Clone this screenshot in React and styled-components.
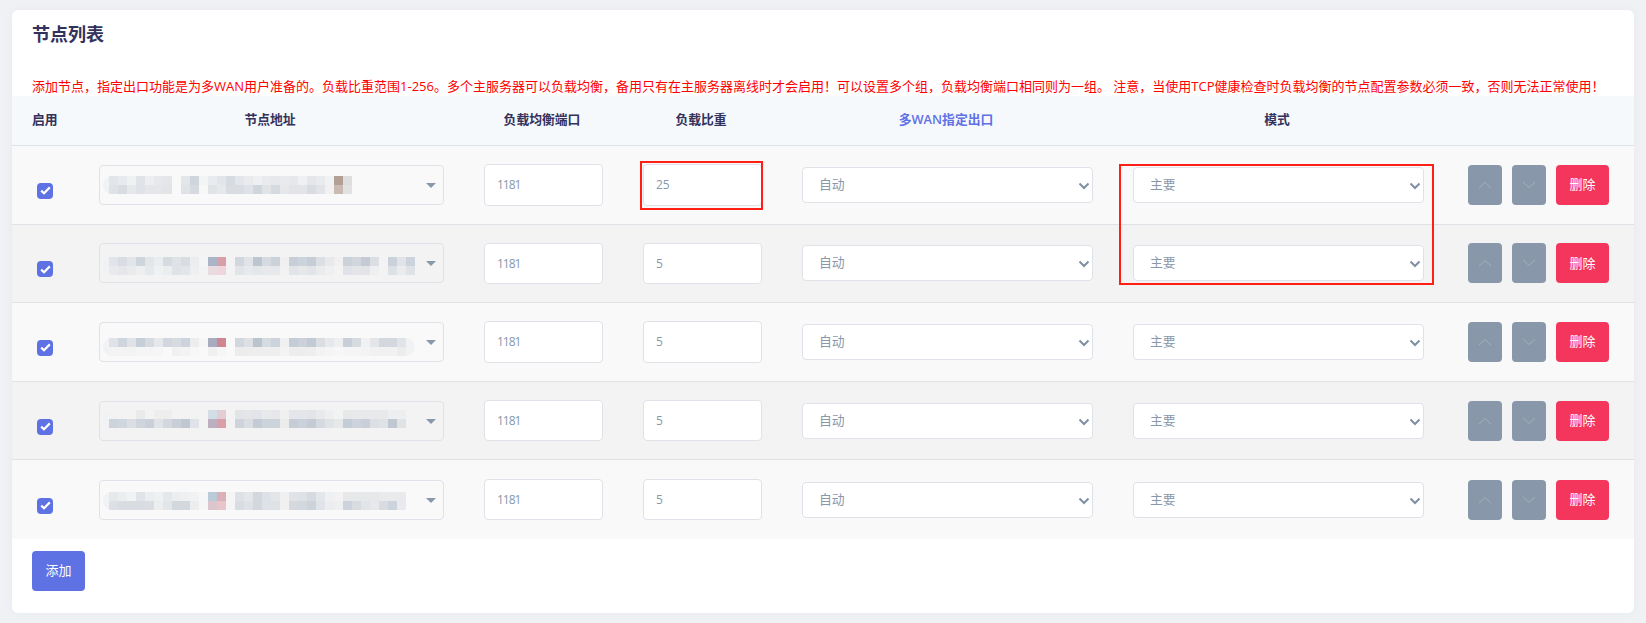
import React from 'react';
import styled, { createGlobalStyle } from 'styled-components';

const FONT = '"Open Sans", "Noto Sans CJK SC", sans-serif';
const COLUMNS = '67px 385px 159px 159px 331px 331px 190px';

const GlobalStyle = createGlobalStyle`
  html, body {
    margin: 0;
    background: #eff1f5;
    font-family: ${FONT};
  }
  * {
    box-sizing: border-box;
  }
`;

const Page = styled.div`
  padding: 10px 12px;
  height: 623px;
  overflow: hidden;
`;

const Card = styled.section`
  position: relative;
  background: #fff;
  border-radius: 6px;
  padding-top: 12px;
  padding-bottom: 22px;
  box-shadow: 0 0 8px rgba(136, 152, 170, 0.08);
  overflow: hidden;
`;

const Title = styled.h3`
  margin: 0;
  padding-left: 20px;
  font-size: 18px;
  line-height: 24px;
  font-weight: 600;
  color: #32325d;
`;

const Notice = styled.div`
  margin-top: 30px;
  padding-left: 20px;
  font-size: 13px;
  line-height: 20px;
  color: #ff0000;
  white-space: nowrap;
`;

const HeadRow = styled.div`
  display: grid;
  grid-template-columns: ${COLUMNS};
  align-items: center;
  height: 50px;
  padding-bottom: 5px;
  background: #f6f9fc;
  border-bottom: 1px solid #dfe2e6;
`;

const HeadCell = styled.div`
  padding: ${(p) => (p.$left ? '0 0 0 20px' : '0 23px 0 20px')};
  font-size: 12.8px;
  font-weight: 600;
  text-align: ${(p) => (p.$left ? 'left' : 'center')};
  color: ${(p) => (p.$accent ? '#5e72e4' : '#32325d')};
`;

const Row = styled.div`
  display: grid;
  grid-template-columns: ${COLUMNS};
  align-items: center;
  height: 78.6px;
  background: ${(p) => (p.$even ? '#f3f3f3' : '#f9f9f9')};
  border-bottom: ${(p) => (p.$last ? '0' : '1px solid #dfe2e6')};
`;

const Cell = styled.div`
  padding: 0 20px;
`;

const CheckCell = styled.div`
  padding: 12px 0 0 25px;
  display: flex;
`;

const CheckLabel = styled.label`
  display: flex;
  align-items: center;
  justify-content: center;
  width: 16px;
  height: 16px;
  border-radius: 4px;
  background: #5e72e4;

  input {
    display: none;
  }
`;

const AddressBox = styled.div`
  position: relative;
  height: 40px;
  border: 1px solid #dfe2e8;
  border-radius: 4px;
  display: flex;
  align-items: flex-start;
  padding-left: 3px;
`;

const Caret = styled.span`
  position: absolute;
  right: 7px;
  top: 17px;
  border-style: solid;
  border-width: 5px 5.5px 0;
  border-color: #8898aa transparent transparent;
`;

const MosaicSvg = styled.svg`
  display: block;
  margin-top: ${(p) => p.$top}px;
`;

const TextInput = styled.input`
  display: block;
  width: 100%;
  height: 41.5px;
  padding: 0 12px;
  border: 1px solid #dfe2e8;
  border-radius: 4px;
  background: #fff;
  font-family: ${FONT};
  font-size: 12px;
  letter-spacing: ${(p) => (p.$tight ? '-1px' : '0')};
  color: #8898aa;
  outline: none;
`;

const SelectWrap = styled.div`
  position: relative;
`;

const NativeSelect = styled.select`
  display: block;
  width: 100%;
  height: 36px;
  padding: 0 16px 2px;
  border: 1px solid #dfe2e8;
  border-radius: 4px;
  background: #fff;
  font-family: ${FONT};
  font-size: 12.8px;
  color: #8898aa;
  appearance: none;
  outline: none;
`;

const SelectIcon = styled.svg`
  position: absolute;
  right: 3px;
  top: 15px;
  pointer-events: none;
`;

const Actions = styled.div`
  display: flex;
  gap: 10px;
  padding-left: 24px;
`;

const MoveButton = styled.button`
  width: 34px;
  height: 40px;
  padding: 0;
  display: flex;
  align-items: center;
  justify-content: center;
  border: 0;
  border-radius: 4px;
  background: #8898aa;
`;

const DeleteButton = styled.button`
  width: 53px;
  height: 40px;
  padding: 0 0 2px;
  border: 0;
  border-radius: 4px;
  background: #f5365c;
  color: #fff;
  font-family: ${FONT};
  font-size: 13px;
`;

const AddButton = styled.button`
  display: block;
  width: 53px;
  height: 40px;
  margin: 12px 0 0 20px;
  padding: 0 0 3px;
  border: 0;
  border-radius: 4px;
  background: #5e72e4;
  color: #fff;
  font-family: ${FONT};
  font-size: 13px;
`;

const Annotation = styled.div`
  position: absolute;
  left: ${(p) => p.$x}px;
  top: ${(p) => p.$y}px;
  width: ${(p) => p.$w}px;
  height: ${(p) => p.$h}px;
  border: 2px solid #ff1f14;
  pointer-events: none;
`;

// two-digit tokens are greys, six-digit tokens are full colours
const MOSAICS = [
  {
    top: 10,
    blob: 249,
    rows: [
      'e2e5e9 e8eaed f0f1f3 e0e3e7 eceef0 e6e8eb e4e6ea f9 e3e6ea cfd5dd f3f4f5 e9ebee e2e5e9 d6dae1 e2e5e9 e9ebee eff0f2 e8eaed e6e8eb e8eaed e6e8eb eef0f1 e4e6e9 e8eaed f1f2f3 b3a094 de',
      'dfe2e6 d9dde2 e6e8eb dfe2e6 e4e6e9 e4e6e9 e2e4e8 f9 dfe2e6 d5d9e0 f7 e1e4e7 e6e8eb d9dde2 d9dde2 dfe2e6 d0d6de e1e4e7 d5d9e0 e6e8eb e2e4e8 e2e4e8 d9dde2 e2e4e8 f1 c9bbb2 e2',
    ],
  },
  {
    top: 13,
    blob: 100,
    rows: [
      'e1e4e8 d9dde3 e3e6e9 cfd5dc e3e6e9 eaedef d6dbe1 dfe2e7 d9dde3 ebedef f5 aab6c8 d69faa f3 d2d7de e0e3e8 bcc5d0 d6dbe1 ccd2da f0 c7ced8 cdd3dc c6cdd7 dce0e5 e7e9ec f0 ccd2da d2d7de c4cbd6 dbdfe4 f3 cbd1da e0e3e7 cdd3dc',
      'e8eaed e5e7ea e8eaec eeeff1 e6e9eb f0f1f3 ecedef dfe2e6 e3e5e9 eeeff1 f3 e9dbdf eed6da f3 e1e4e8 e7e9ec e4e7ea e6e8eb e6e8eb f1 e1e4e8 e5e7ea e1e4e8 e9ebed eef0f1 f3 dfe2e6 e3e5e9 e2e4e8 eeeff1 f3 dde0e5 e9ebed dfe2e6',
    ],
  },
  {
    top: 15,
    blob: 312,
    rows: [
      'dfe3e8 ced5dc dfe3e8 c6ced8 d6dbe1 e6e9ec d2d7df d6dbe1 cdd3dc ebedef f6 a9acbf ce8790 f9 d2d7de dde0e5 bac4cf d6dbe1 cdd3dc f0 c4ccd6 cbd1da c2cad5 dadee3 e6e8eb edeff1 c8cfd8 d6dbe1 f0f1f2 e3e5e9 d3d7de d3d7de e0e3e7',
      'f3 f3 f3 f5 f5 f6 f9 f1 f3 f7 f9 f0 f6 f9 ec ed ee ee ee f3 ed ed ee f3 f5 f7 f5 f5 f3 f1 f1 f1 ec',
    ],
  },
  {
    top: 8,
    blob: 120,
    rows: [
      'f2 f3 f3 ea f3 ee ee f3 f3 f3 f3 d3dde6 e3cdd4 f3 e2e4e7 e3e5e8 e1e4e8 e7e9eb e5e7ea f0 e4e6e9 e4e6e9 e2e4e8 e9eaec eeeff1 f2f3f3 e6e8ea e8e9eb e7e9eb e7e9eb e7e9eb eceeef eceeef',
      'ccd3dc d0d6de dbdfe3 cfd5dd c9d0d9 e0e3e7 d3d8df c8cfd9 bfc7d1 e0e3e7 f3 bcb0c0 d9a0aa f3 cfd4dc dadee3 c3cbd5 cdd3db cdd3db ec c6cdd6 cbd1da c4cbd5 d5d9e0 e0e3e6 e6e8ea c4ccd5 cdd3dc c9cfd8 dce0e5 e0e3e6 bfc7d1 e0e3e6',
    ],
  },
  {
    top: 11,
    blob: 120,
    rows: [
      'e6e9ec ebedef f1f2f3 e0e4e8 ebedef eef0f1 e5e8eb eceef0 eff0f2 f1f2f3 f6 b9cad9 dcb0ba f5 dee1e5 e4e6ea d3d8de dee1e6 e4e7ea f0 e0e3e7 dee1e6 d6dbe1 e4e7ea eef0f1 f2 e6e8ea e6e8ea e6e8ea e6e8ea e8eaec e8eaec e8eaec',
      'dce0e5 d9dde2 d9dde2 d9dde2 dadee3 ebedef e3e6e9 d3d8df d3d8df ebedef f6 dcc5cd e8c5ca f5 d9dde3 dee2e6 d3d8de dee1e6 dee1e6 f0 d5d9df d3d8df cdd3db e0e3e7 ecedef eeeff0 cdd3dc d8dce1 e2e5e8 e6e8eb d8dce1 cdd3dc e8eaed',
    ],
  },
];

const toFill = (token) => (token.length === 2 ? `#${token}${token}${token}` : `#${token}`);

function Mosaic({ top, blob, rows }) {
  return (
    <MosaicSvg $top={top} width="320" height="20" viewBox="0 0 320 20">
      <rect x="0" y="0" width={blob} height="18" rx="9" fill="#f1f2f4" />
      {rows.map((row, y) =>
        row.split(' ').map((token, x) => (
          <rect key={`${y}-${x}`} x={6 + x * 9} y={y * 9} width="9" height="9" fill={toFill(token)} />
        ))
      )}
    </MosaicSvg>
  );
}

function Chevron({ up }) {
  return (
    <svg width="14" height="8" viewBox="0 0 14 8" fill="none" stroke="#a4afbb" strokeWidth="1">
      <polyline points={up ? '1,7 7,1.5 13,7' : '1,1 7,6.5 13,1'} />
    </svg>
  );
}

function Select({ value }) {
  return (
    <SelectWrap>
      <NativeSelect defaultValue={value}>
        <option>{value}</option>
      </NativeSelect>
      <SelectIcon width="12" height="8" viewBox="0 0 12 8" fill="none" stroke="#7f8fa3" strokeWidth="2">
        <polyline points="1.5,1.5 6,6 10.5,1.5" />
      </SelectIcon>
    </SelectWrap>
  );
}

const WEIGHTS = ['25', '5', '5', '5', '5'];

export default function App() {
  return (
    <Page>
      <GlobalStyle />
      <Card>
        <Title>节点列表</Title>
        <Notice>
          添加节点，指定出口功能是为多WAN用户准备的。负载比重范围1-256。多个主服务器可以负载均衡，备用只有在主服务器离线时才会启用！可以设置多个组，负载均衡端口相同则为一组。 注意，当使用TCP健康检查时负载均衡的节点配置参数必须一致，否则无法正常使用！
        </Notice>
        <HeadRow>
          <HeadCell $left>启用</HeadCell>
          <HeadCell>节点地址</HeadCell>
          <HeadCell>负载均衡端口</HeadCell>
          <HeadCell>负载比重</HeadCell>
          <HeadCell $accent>多WAN指定出口</HeadCell>
          <HeadCell>模式</HeadCell>
          <HeadCell />
        </HeadRow>
        {MOSAICS.map((mosaic, i) => (
          <Row key={i} $even={i % 2 === 1} $last={i === MOSAICS.length - 1}>
            <CheckCell>
              <CheckLabel>
                <input type="checkbox" defaultChecked />
                <svg width="11" height="9" viewBox="0 0 11 9" fill="none" stroke="#fff" strokeWidth="2.2">
                  <polyline points="1.2,4.6 4,7.2 9.8,1.4" />
                </svg>
              </CheckLabel>
            </CheckCell>
            <Cell>
              <AddressBox>
                <Mosaic {...mosaic} />
                <Caret />
              </AddressBox>
            </Cell>
            <Cell>
              <TextInput $tight defaultValue="1181" />
            </Cell>
            <Cell>
              <TextInput defaultValue={WEIGHTS[i]} />
            </Cell>
            <Cell>
              <Select value="自动" />
            </Cell>
            <Cell>
              <Select value="主要" />
            </Cell>
            <Actions>
              <MoveButton>
                <Chevron up />
              </MoveButton>
              <MoveButton>
                <Chevron />
              </MoveButton>
              <DeleteButton>删除</DeleteButton>
            </Actions>
          </Row>
        ))}
        <AddButton>添加</AddButton>
        <Annotation $x={628} $y={151} $w={123} $h={49} />
        <Annotation $x={1107} $y={154} $w={315} $h={121} />
      </Card>
    </Page>
  );
}
